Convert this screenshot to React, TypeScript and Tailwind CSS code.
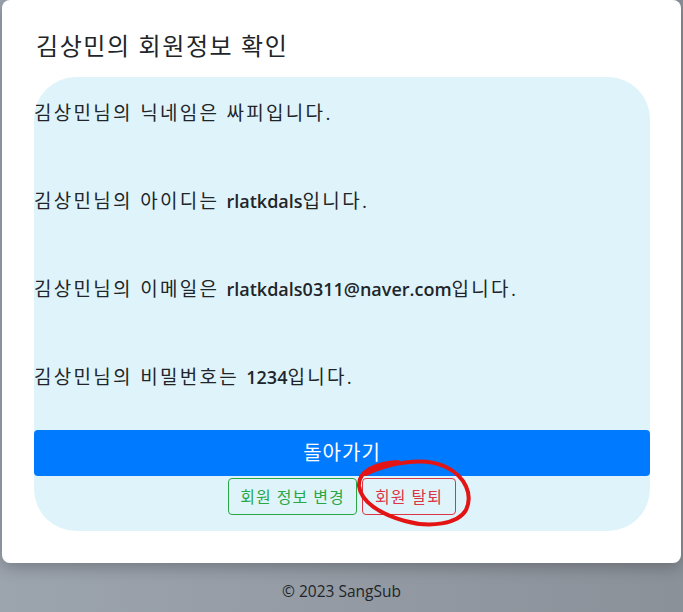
import React from "react";

const font = "font-['Open_Sans','Noto_Sans_CJK_KR',sans-serif]";

function Line({ pre, bold, post, last }: { pre: string; bold?: string; post?: string; last?: boolean }) {
  return (
    <p className={`text-[19px] leading-[27px] tracking-[2.3px] ${last ? "" : "mb-[61px]"}`}>
      {pre}
      {bold && <b className="font-semibold text-[18px] tracking-normal">{bold}</b>}
      {post}
    </p>
  );
}

export default function App() {
  return (
    <div className={`relative w-[683px] h-[612px] overflow-hidden bg-gradient-to-r from-[#9ca4ae] to-[#8b9199] ${font} text-[#212529]`}>
      <div className="ml-[2px] w-[679px] h-[563px] bg-white rounded-lg shadow-[0_4px_16px_rgba(0,0,0,0.25)] pt-[31px] pl-[32px]">
        <h1 className="text-[24px] leading-[30px] tracking-[1.6px] font-normal pl-[2px]">김상민의 회원정보 확인</h1>
        <div className="mt-[16px] w-[616px] h-[454px] bg-[#dff4fa] rounded-[42px] pt-[23px] flex flex-col">
          <Line pre="김상민님의 닉네임은 싸피입니다." />
          <Line pre="김상민님의 아이디는 " bold="rlatkdals" post="입니다." />
          <Line pre="김상민님의 이메일은 " bold="rlatkdals0311@naver.com" post="입니다." />
          <Line pre="김상민님의 비밀번호는 " bold="1234" post="입니다." last />
          <button className="mt-[39px] h-[46px] w-full rounded-[4px] bg-[#007bff] text-white text-[20px] leading-[28px] tracking-[1px]">
            돌아가기
          </button>
          <div className="mt-[2px] flex justify-center gap-[5px]">
            <button className="h-[37px] w-[129px] rounded-[4px] border border-[#28a745] text-[#28a745] text-[16px] tracking-[1px]">
              회원 정보 변경
            </button>
            <button className="h-[37px] w-[94px] rounded-[4px] border border-[#dc3545] text-[#dc3545] text-[16px] tracking-[1px]">
              회원 탈퇴
            </button>
          </div>
        </div>
      </div>
      <div className="h-[57px] flex items-center justify-center text-[15.5px] text-[#212529]">© 2023 SangSub</div>
      <svg className="absolute inset-0 pointer-events-none" width="683" height="612" viewBox="0 0 683 612">
        <path
          d="M 366 474 C 390 462, 425 457, 446 467 C 466 477, 473 495, 466 510 C 458 524, 430 528, 405 521 C 380 514, 361 502, 359 486 C 358 471, 376 463, 398 462"
          fill="none"
          stroke="#e31414"
          strokeWidth="4"
          strokeLinecap="round"
        />
      </svg>
    </div>
  );
}
